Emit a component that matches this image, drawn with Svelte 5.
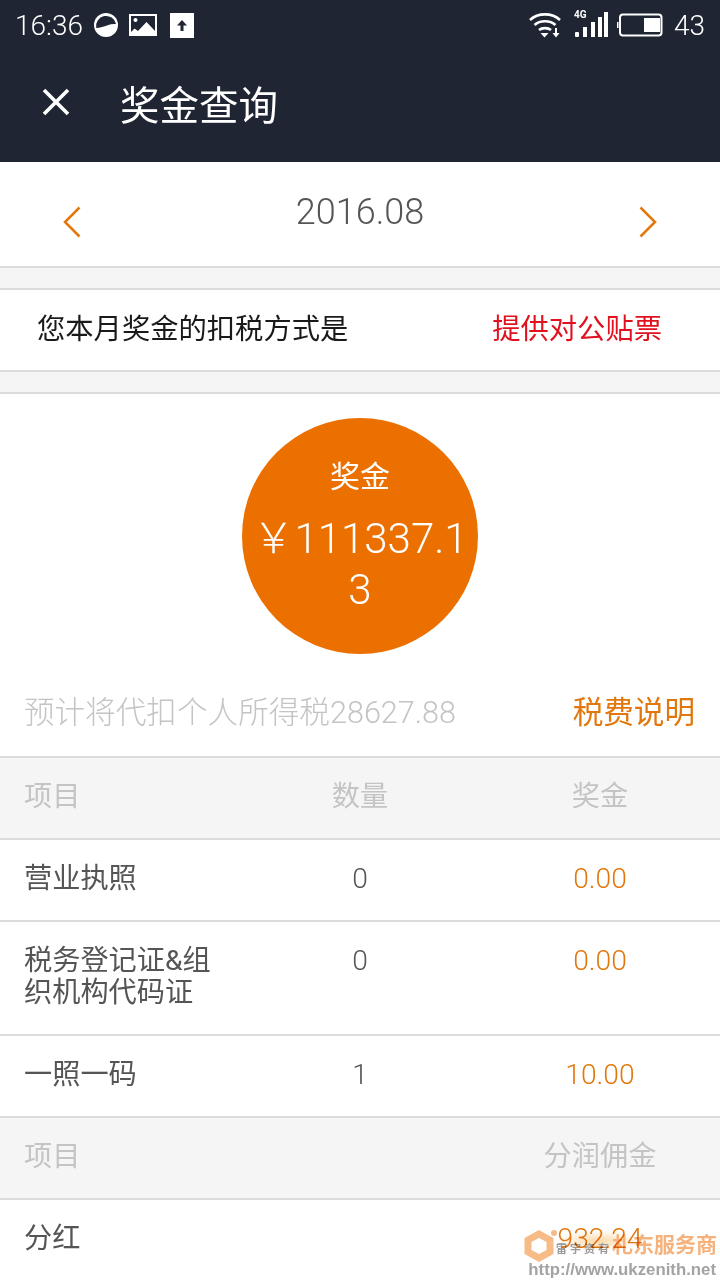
<script>
	const rows = [
		{ name: '营业执照', count: '0', money: '0.00' },
		{ name: '税务登记证&组织机构代码证', count: '0', money: '0.00', tall: true },
		{ name: '一照一码', count: '1', money: '10.00' }
	];
</script>

<div class="page">
	<div class="status">
		<div class="status-left">
			<span class="time">16:36</span>
			<svg class="ic-moon" width="24" height="24" viewBox="0 0 24 24">
				<circle cx="12" cy="12" r="12" fill="#fff" />
				<path d="M2.200 15A10 10 0 0 1 22 11C16 10.500 12 13 8 14c-2 .5-4 1-5.800 1z" fill="#1f2532" />
			</svg>
			<svg class="ic-pic" width="28" height="22" viewBox="0 0 28 22">
				<path d="M0 0h28v22H0z" fill="#fff" />
				<path d="M2 2h24v15l-8.500-9L9 17l-3.500-2.500L2 18z" fill="#1f2532" />
				<circle cx="6.500" cy="6" r="2" fill="#fff" />
			</svg>
			<svg class="ic-up" width="24" height="25" viewBox="0 0 24 25">
				<path d="M0 0h24v25H0z" fill="#fff" />
				<path d="M12 7l5 5.500h-3.500V18h-3v-5.500H7z" fill="#1f2532" />
			</svg>
		</div>
		<div class="status-right">
			<svg width="34" height="28" viewBox="0 0 34 28" fill="none" stroke="#fff" stroke-width="2.600">
				<path d="M2 9c8-7.500 22-7.500 30 0" />
				<path d="M6.500 14c5.500-5 15.500-5 21 0" />
				<path d="M11 19c3-2.500 9-2.500 12 0" />
				<path d="M12.500 22h8l-4 4.500z" fill="#fff" stroke="none" />
				<path d="M28 17v6" stroke-width="2" />
				<path d="M24.500 22h7l-3.500 4.500z" fill="#fff" stroke="none" />
			</svg>
			<div class="signal">
				<span class="four-g">4G</span>
				<svg width="34" height="26" viewBox="0 0 34 26" fill="#fff">
					<rect x="1" y="20" width="4" height="5" rx="1" />
					<rect x="9" y="15" width="4" height="10" />
					<rect x="17" y="10" width="4" height="15" />
					<rect x="24" y="5" width="4" height="20" />
					<rect x="30" y="0" width="4" height="25" />
				</svg>
			</div>
			<svg width="46" height="24" viewBox="0 0 46 24">
				<rect x="3" y="1.500" width="41.500" height="21" rx="3" fill="none" stroke="#fff" stroke-width="2" />
				<rect x="0" y="9" width="1.500" height="6" fill="#fff" />
				<rect x="27" y="5" width="16" height="14" fill="#fff" />
			</svg>
			<span class="level">43</span>
		</div>
	</div>

	<div class="title-bar">
		<svg class="close" width="30" height="30" viewBox="0 0 30 30" stroke="#fff" stroke-width="3.600" fill="none">
			<path d="M3 3l24 24M27 3L3 27" />
		</svg>
		<span class="title">奖金查询</span>
	</div>

	<div class="date-bar">
		<svg width="18" height="32" viewBox="0 0 18 32" fill="none" stroke="#e2780d" stroke-width="2.500">
			<path d="M16.500 1.500L2 16l14.500 14.500" />
		</svg>
		<span class="date">2016.08</span>
		<svg width="18" height="32" viewBox="0 0 18 32" fill="none" stroke="#e2780d" stroke-width="2.500">
			<path d="M1.500 1.500L16 16 1.500 30.500" />
		</svg>
	</div>

	<div class="gap"></div>

	<div class="tax-way">
		<span>您本月奖金的扣税方式是</span>
		<span class="red">提供对公贴票</span>
	</div>

	<div class="gap"></div>

	<div class="bonus">
		<div class="circle">
			<div class="circle-label">奖金</div>
			<div class="circle-num">￥111337.13</div>
		</div>
		<div class="tax-line">
			<span class="tax-text">预计将代扣个人所得税28627.88</span>
			<span class="tax-link">税费说明</span>
		</div>
	</div>

	<div class="row head">
		<div>项目</div>
		<div class="mid">数量</div>
		<div class="end">奖金</div>
	</div>
	{#each rows as row}
		<div class="row" class:tall={row.tall}>
			<div class="name">{row.name}</div>
			<div class="mid num">{row.count}</div>
			<div class="end money">{row.money}</div>
		</div>
	{/each}
	<div class="row head">
		<div>项目</div>
		<div class="mid"></div>
		<div class="end">分润佣金</div>
	</div>
	<div class="row">
		<div class="name">分红</div>
		<div class="mid"></div>
		<div class="end money">932.24</div>
	</div>

	<div class="watermark">
		<div class="wm-glow"></div>
		<svg width="30" height="32" viewBox="0 0 30 32" fill="none" stroke="#f7bb87" stroke-width="7">
			<path d="M15 4l11 6v12l-11 6-11-6V10z" />
		</svg>
		<span class="wm-dot"></span>
		<div class="wm-small">雷宇资有</div>
		<div class="wm-brand">札东服务商</div>
		<div class="wm-url">http://www.ukzenith.net</div>
	</div>
</div>

<style>
	:global(body) {
		background: #fff;
	}

	.page {
		position: relative;
		width: 720px;
		height: 1280px;
		overflow: hidden;
		font-family: Roboto, "Noto Sans CJK SC", sans-serif;
		background: #fff;
	}

	.status {
		height: 50px;
		background: #1f2532;
		color: #fff;
		display: flex;
		justify-content: space-between;
		align-items: center;
		padding: 0 15px;
	}

	.status-left, .status-right {
		display: flex;
		align-items: center;
	}

	.time, .level {
		font-size: 28px;
		font-weight: 300;
	}

	.ic-moon { margin-left: 11px; }
	.ic-pic { margin-left: 11px; }
	.ic-up { margin-left: 13px; }

	.signal {
		position: relative;
		margin-left: 12px;
		display: flex;
	}

	.four-g {
		position: absolute;
		left: 0;
		top: -3px;
		font-size: 10px;
		font-weight: 700;
		line-height: 12px;
	}

	.status-right svg:nth-of-type(2) {
		margin-left: 9px;
	}

	.level {
		margin-left: 11px;
	}

	.title-bar {
		height: 112px;
		background: #1f2532;
		display: flex;
		align-items: center;
		padding-bottom: 8px;
		box-sizing: border-box;
	}

	.close {
		margin-left: 41px;
	}

	.title {
		margin-left: 49px;
		font-size: 39.500px;
		color: #fff;
	}

	.date-bar {
		height: 106px;
		box-sizing: border-box;
		border-bottom: 2px solid #dcdcdc;
		display: flex;
		align-items: center;
		justify-content: space-between;
		padding: 16px 63px 0;
	}

	.date {
		font-size: 36px;
		font-weight: 300;
		color: #555;
		margin-top: -21px;
	}

	.gap {
		height: 22px;
		box-sizing: border-box;
		background: #f5f5f5;
		border-bottom: 2px solid #dcdcdc;
	}

	.tax-way {
		height: 82px;
		box-sizing: border-box;
		border-bottom: 2px solid #dcdcdc;
		display: flex;
		justify-content: space-between;
		align-items: center;
		padding: 0 58px 8px 37px;
		font-size: 28.300px;
		color: #1a1a1a;
	}

	.red {
		color: #e0121f;
	}

	.bonus {
		height: 362px;
		box-sizing: border-box;
		padding-top: 24px;
	}

	.circle {
		width: 236px;
		height: 236px;
		margin: 0 auto;
		border-radius: 50%;
		background: #ec7000;
		color: #fff;
		text-align: center;
		box-sizing: border-box;
		padding: 37px 10px 0;
	}

	.circle-label {
		font-size: 30px;
		line-height: 44px;
	}

	.circle-num {
		font-size: 42px;
		font-weight: 300;
		line-height: 51px;
		margin-top: 14px;
		word-break: break-all;
	}

	.tax-line {
		display: flex;
		justify-content: space-between;
		align-items: center;
		padding: 0 25px 0 24px;
		margin-top: 34px;
		height: 44px;
	}

	.tax-text {
		font-size: 30.600px;
		font-weight: 300;
		color: #c4c4c4;
	}

	.tax-link {
		font-size: 30.600px;
		color: #e2780d;
	}

	.row {
		height: 82px;
		box-sizing: border-box;
		border-top: 2px solid #dcdcdc;
		display: grid;
		grid-template-columns: 240px 240px 240px;
		padding-top: 21px;
		font-size: 28.200px;
		line-height: 36px;
		color: #555;
	}

	.row > div:first-child {
		padding-left: 24px;
	}

	.row.tall {
		height: 114px;
	}

	.row .name {
		padding-right: 25px;
		line-height: 32px;
		padding-top: 2px;
	}

	.head {
		background: #f5f5f5;
		color: #c4c4c4;
	}

	.mid, .end {
		text-align: center;
	}

	.num {
		font-weight: 300;
	}

	.money {
		color: #e2780d;
		font-weight: 300;
	}

	.watermark {
		position: absolute;
		left: 524px;
		top: 1230px;
		width: 196px;
		height: 50px;
		mix-blend-mode: multiply;
	}

	.watermark svg {
		position: absolute;
		left: 0;
		top: 0;
	}

	.wm-glow {
		position: absolute;
		left: 32px;
		top: 0;
		width: 84px;
		height: 22px;
		background: radial-gradient(closest-side, #fbd9a8, #fff);
	}

	.wm-dot {
		position: absolute;
		left: 27px;
		top: 0;
		width: 6px;
		height: 6px;
		border-radius: 50%;
		background: #f7bb87;
	}

	.wm-small {
		position: absolute;
		left: 32px;
		top: 13px;
		width: 56px;
		font-size: 11px;
		line-height: 14px;
		font-weight: 700;
		letter-spacing: 3px;
		color: #9a9a9a;
		white-space: nowrap;
	}

	.wm-brand {
		position: absolute;
		left: 88px;
		top: 1px;
		font-size: 21px;
		line-height: 28px;
		font-weight: 700;
		color: #f6b27c;
		white-space: nowrap;
	}

	.wm-url {
		position: absolute;
		right: 4px;
		top: 31px;
		font-family: "Liberation Sans", sans-serif;
		font-size: 16.800px;
		font-weight: 700;
		line-height: 18px;
		color: #a3a3a3;
		white-space: nowrap;
	}
</style>
